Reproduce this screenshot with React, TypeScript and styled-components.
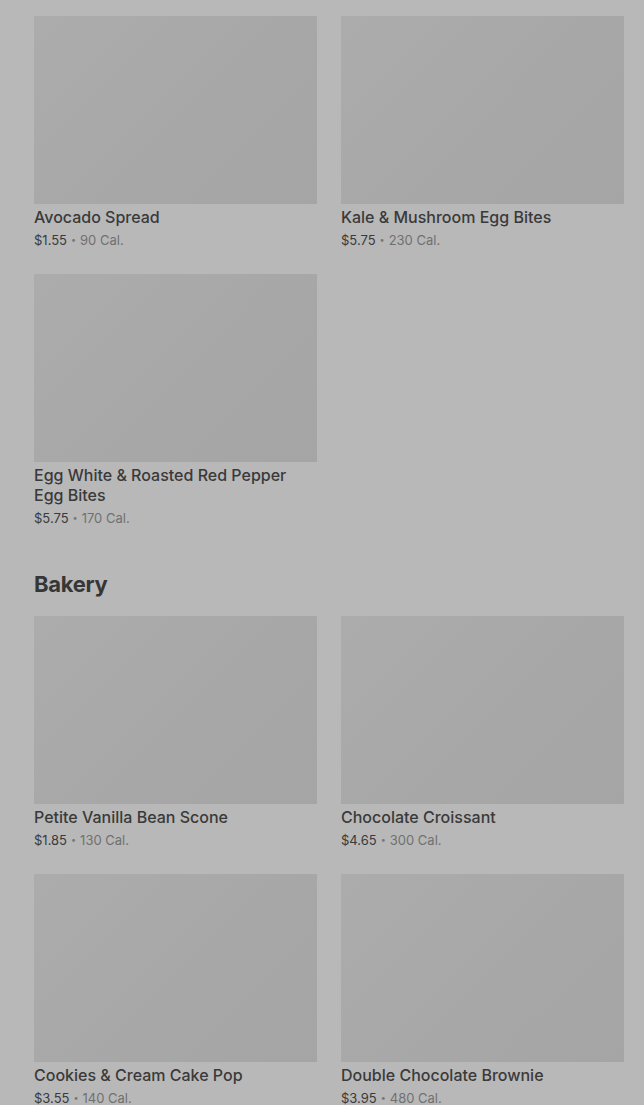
import React from 'react'
import styled, { createGlobalStyle } from 'styled-components'

type Item = { name: string; price: string; cal: number }

const sections: { title?: string; items: Item[] }[] = [
  {
    items: [
      { name: 'Avocado Spread', price: '$1.55', cal: 90 },
      { name: 'Kale & Mushroom Egg Bites', price: '$5.75', cal: 230 },
      { name: 'Egg White & Roasted Red Pepper Egg Bites', price: '$5.75', cal: 170 },
    ],
  },
  {
    title: 'Bakery',
    items: [
      { name: 'Petite Vanilla Bean Scone', price: '$1.85', cal: 130 },
      { name: 'Chocolate Croissant', price: '$4.65', cal: 300 },
      { name: 'Cookies & Cream Cake Pop', price: '$3.55', cal: 140 },
      { name: 'Double Chocolate Brownie', price: '$3.95', cal: 480 },
    ],
  },
]

const App = () => {
  return (
    <Page>
      <GlobalStyle />
      {sections.map((s, i) => (
        <Section key={i}>
          {s.title && <Heading>{s.title}</Heading>}
          <Grid>
            {s.items.map((item) => (
              <Card key={item.name}>
                <Thumb />
                <Name>{item.name}</Name>
                <Meta>
                  <Price>{item.price}</Price>
                  <Dot>•</Dot>
                  <Cal>{item.cal} Cal.</Cal>
                </Meta>
              </Card>
            ))}
          </Grid>
        </Section>
      ))}
    </Page>
  )
}

const GlobalStyle = createGlobalStyle`
  html, body {
    margin: 0;
    padding: 0;
    background: #b8b8b8;
    font-family: Inter, "Noto Sans", "Liberation Sans", sans-serif;
  }
`
const Page = styled.div`
  min-height: 1105px;
  padding: 16px 20px 0 34px;
  box-sizing: border-box;
  background: #b8b8b8;
  overflow: hidden;
`
const Section = styled.section`
  margin-bottom: 41px;
`
const Heading = styled.h2`
  margin: 0 0 16px;
  font-size: 22px;
  line-height: 32px;
  font-weight: 700;
  color: #363636;
  letter-spacing: -0.3px;
`
const Grid = styled.div`
  display: grid;
  grid-template-columns: 283px 283px;
  column-gap: 24px;
  row-gap: 25px;
`
const Card = styled.div`
  display: flex;
  flex-direction: column;
`
const Thumb = styled.div`
  height: 188px;
  background: linear-gradient(135deg, #acacac 0%, #a7a7a7 60%, #a5a5a5 100%);
`
const Name = styled.div`
  margin-top: 3px;
  font-size: 16px;
  line-height: 20px;
  font-weight: 500;
  color: #3a3a3a;
  padding-right: 20px;
`
const Meta = styled.div`
  margin-top: 4px;
  display: flex;
  align-items: center;
  gap: 4px;
  font-size: 13px;
  line-height: 18px;
`
const Price = styled.span`
  color: #3a3a3a;
`
const Dot = styled.span`
  color: #777;
  font-size: 9px;
`
const Cal = styled.span`
  color: #707070;
`

export default App
